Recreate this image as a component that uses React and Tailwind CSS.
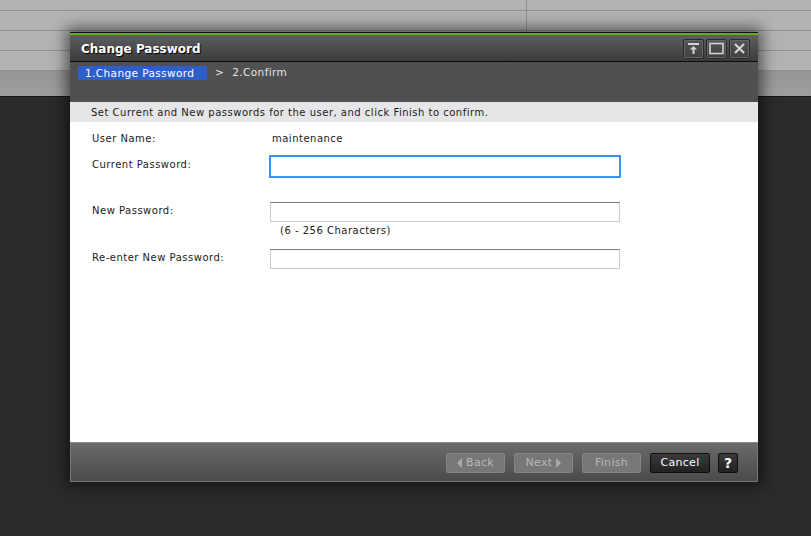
import React from 'react'

const font = { fontFamily: '"DejaVu Sans", Verdana, sans-serif' }

const BgRow = ({ h }) => (
  <div className={`flex border-b border-[#8f8f8f] ${h}`}>
    <div className="w-[527px] border-r border-[#8f8f8f]" />
    <div className="flex-1" />
  </div>
)

const TitleButton = ({ children }) => (
  <div className="w-[21px] h-[20px] rounded-[2px] border border-[#2a2a2a] bg-gradient-to-b from-[#555] to-[#3f3f3f] shadow-[inset_0_0_0_1px_#666] flex items-center justify-center">
    {children}
  </div>
)

const FooterButton = ({ children, w = 'w-[59px]', dark }) => (
  <div
    className={`${w} h-[20px] rounded-[2px] flex items-center justify-center gap-[4px] text-[11px] tracking-[0.3px] ${
      dark
        ? 'bg-gradient-to-b from-[#3a3a3a] to-[#222] border border-[#0e0e0e] text-white'
        : 'bg-[#777] border border-[#848484] text-[#b9b9b9]'
    }`}
  >
    {children}
  </div>
)

const Field = ({ focused }) => (
  <div
    className={
      focused
        ? 'w-[352px] h-[23px] -ml-px border-2 border-[#3b93f0] bg-white'
        : 'w-[350px] h-[20px] border border-[#cacaca] border-t-[#777] bg-white'
    }
  />
)

export default function App() {
  return (
    <div className="relative w-[811px] h-[536px] overflow-hidden bg-[#2b2b2b]" style={font}>
      {/* page behind the dialog */}
      <div className="bg-[#b3b3b3]">
        <BgRow h="h-[11px]" />
        <BgRow h="h-[20px]" />
        <BgRow h="h-[20px]" />
        <BgRow h="h-[20px]" />
      </div>
      <div className="h-[25px] bg-gradient-to-b from-[#969696] to-[#9e9e9e]" />
      <div className="h-px bg-[#151515]" />

      {/* dialog */}
      <div className="absolute left-[70px] top-[32px] w-[688px] h-[450px] flex flex-col bg-[#505050] shadow-[0_0_14px_4px_rgba(0,0,0,0.55)]">
        <div className="h-px bg-[#111]" />
        <div className="h-[2px] bg-[#5fb11c]" />
        <div className="h-[26px] flex items-center justify-between pl-[11px] pr-[8px] bg-gradient-to-b from-[#5e5e5e] to-[#3c3c3c]">
          <span className="text-[12px] font-bold text-white pt-[1px] [text-shadow:1px_1px_1px_#000]">Change Password</span>
          <div className="flex gap-[2px] pt-[1px]">
            <TitleButton>
              <svg width="13" height="13" viewBox="0 0 13 13">
                <rect x="1" y="1" width="11" height="2" fill="#d4d4d4" />
                <path d="M6.5 4 L10 7.5 H7.5 V12 H5.5 V7.5 H3 Z" fill="#d4d4d4" />
              </svg>
            </TitleButton>
            <TitleButton>
              <svg width="15" height="13" viewBox="0 0 15 13">
                <rect x="1" y="1.5" width="13" height="10" fill="none" stroke="#d4d4d4" strokeWidth="1.6" />
              </svg>
            </TitleButton>
            <TitleButton>
              <svg width="13" height="13" viewBox="0 0 13 13">
                <path d="M2 2 L11 11 M11 2 L2 11" stroke="#d4d4d4" strokeWidth="2.2" />
              </svg>
            </TitleButton>
          </div>
        </div>
        <div className="h-px bg-[#0c0c0c]" />

        {/* steps */}
        <div className="h-[40px] bg-[#505050] pt-[4px] pl-[8px]">
          <div className="flex items-center h-[14px] text-[10.5px] tracking-[0.4px] text-[#e6e6e6]">
            <div className="w-[129px] h-[14px] bg-[#2c5fcc] pl-[7px] leading-[14px] text-white whitespace-nowrap">
              1.Change Password
            </div>
            <span className="ml-[8px]">&gt;</span>
            <span className="ml-[8px]">2.Confirm</span>
          </div>
        </div>

        {/* hint band */}
        <div className="h-[20px] bg-[#e6e6e8] flex items-center pl-[21px] text-[10px] tracking-[0.5px] text-[#1a1a1a]">
          Set Current and New passwords for the user, and click Finish to confirm.
        </div>

        {/* body */}
        <div className="h-[320px] bg-white pl-[22px] pt-[7px] text-[10px] tracking-[0.5px] text-[#1a1a1a]">
          <div className="flex items-center h-[19px]">
            <span className="w-[180px]">User Name:</span>
            <span>maintenance</span>
          </div>
          <div className="flex items-start mt-[7px]">
            <span className="w-[178px] mt-[2px]">Current Password:</span>
            <Field focused />
          </div>
          <div className="flex items-start mt-[24px]">
            <span className="w-[178px] mt-[1px]">New Password:</span>
            <Field />
          </div>
          <div className="ml-[188px] mt-[2px] h-[14px] leading-[14px]">(6 - 256 Characters)</div>
          <div className="flex items-start mt-[11px]">
            <span className="w-[178px] mt-[1px]">Re-enter New Password:</span>
            <Field />
          </div>
        </div>

        {/* footer */}
        <div className="h-[40px] border-t border-[#8a8a8a] bg-gradient-to-b from-[#6b6b6b] to-[#4a4a4a] shadow-[inset_1px_0_0_#777,inset_-1px_0_0_#777,inset_0_-1px_0_#777] flex items-center justify-end gap-[9px] pr-[20px] pt-[1px]">
          <FooterButton>
            <svg width="5" height="10" viewBox="0 0 5 10">
              <path d="M5 0 L0 5 L5 10 Z" fill="#a9a9a9" />
            </svg>
            <span>Back</span>
          </FooterButton>
          <FooterButton>
            <span>Next</span>
            <svg width="5" height="10" viewBox="0 0 5 10">
              <path d="M0 0 L5 5 L0 10 Z" fill="#a9a9a9" />
            </svg>
          </FooterButton>
          <FooterButton>Finish</FooterButton>
          <FooterButton w="w-[60px]" dark>Cancel</FooterButton>
          <div className="-ml-px w-[20px] h-[20px] rounded-[2px] bg-gradient-to-b from-[#3a3a3a] to-[#222] border border-[#0e0e0e] text-white font-bold text-[14px] flex items-center justify-center">
            ?
          </div>
        </div>
      </div>
    </div>
  )
}
